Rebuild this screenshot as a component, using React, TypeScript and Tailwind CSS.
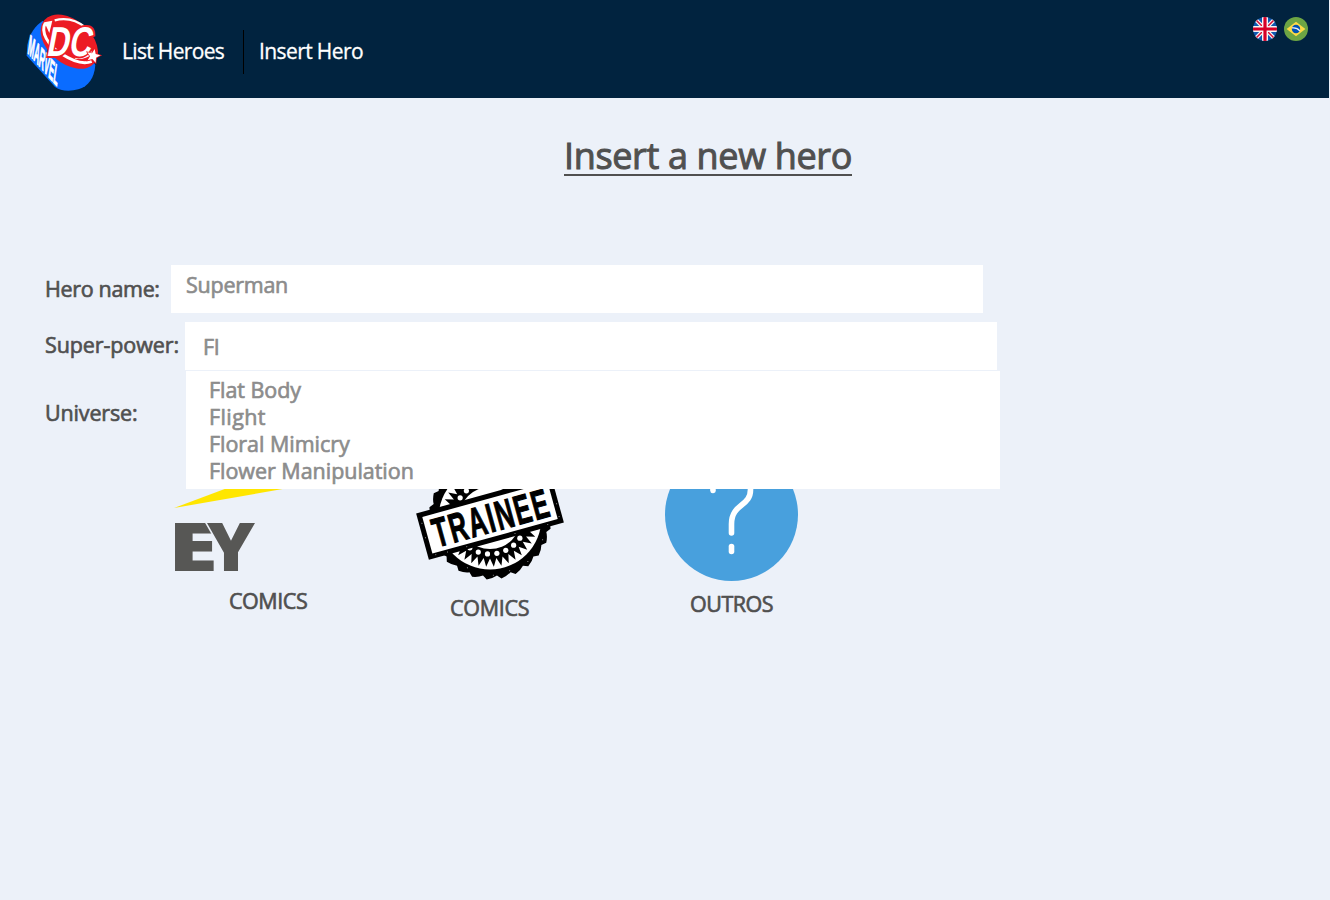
import React from "react";

const suggestions = [
  { name: "Flat Body", tracking: "tracking-[-0.05px]" },
  { name: "Flight", tracking: "tracking-[0.4px]" },
  { name: "Floral Mimicry", tracking: "tracking-[-0.03px]" },
  { name: "Flower Manipulation", tracking: "tracking-[-0.03px]" },
];

function Logo() {
  return (
    <svg className="block h-[95px] w-[100px] overflow-visible" viewBox="0 0 300 285">
      <path d="M82 48 C62 62 44 84 37 120 L35 152 L120 246 C134 258 165 260 190 253 C220 244 238 220 241 180 L190 90 Z" fill="#0a6cff" />
      <g transform="translate(37 143) skewY(49) skewX(-7)">
        <text x="0" y="0" fontFamily="Liberation Sans Narrow, Liberation Sans, sans-serif" fontWeight="700" fontSize="94" fill="#fff" stroke="#fff" strokeWidth="3.5" textLength="89" lengthAdjust="spacingAndGlyphs">MARVEL</text>
      </g>
      <ellipse cx="163" cy="110" rx="99" ry="65" transform="rotate(41 163 110)" fill="#ec1c24" />
      <path d="M91 54 C76 80 98 122 140 147 C174 169 208 178 230 169" fill="none" stroke="#fff" strokeWidth="9" />
      <path d="M119 46 C154 37 188 48 212 68 M180 157 C202 163 224 151 231 141" fill="none" stroke="#fff" strokeWidth="7" />
      <path d="M88 52 L112 47 L103 84 Z" fill="#fff" />
      <g transform="translate(92 153) skewX(-11)">
        <text x="0" y="0" fontFamily="Liberation Sans, sans-serif" fontWeight="700" fontSize="125" fill="#fff" stroke="#ec1c24" strokeWidth="12" paintOrder="stroke" textLength="134" lengthAdjust="spacingAndGlyphs">DC</text>
      </g>
      <path d="M239 132 L242 147 L256 151 L243 158 L242 173 L232 162 L218 166 L225 154 L217 142 L231 145 Z" fill="#fff" stroke="#ec1c24" strokeWidth="4" paintOrder="stroke" />
    </svg>
  );
}

function FlagUk() {
  return (
    <svg className="block size-6" viewBox="0 0 24 24">
      <clipPath id="uk"><circle cx="12" cy="12" r="12" /></clipPath>
      <g clipPath="url(#uk)">
        <rect width="24" height="24" fill="#0f57b0" />
        <path d="M0 0 L24 24 M24 0 L0 24" stroke="#f3f3f3" strokeWidth="4" />
        <path d="M0 0 L24 24 M24 0 L0 24" stroke="#d80d35" strokeWidth="1.5" />
        <path d="M12 0V24M0 12H24" stroke="#f5f5f5" strokeWidth="6" />
        <path d="M12 0V24M0 12H24" stroke="#d80027" strokeWidth="3.2" />
      </g>
    </svg>
  );
}

function FlagBrazil() {
  return (
    <svg className="block size-6" viewBox="0 0 24 24">
      <circle cx="12" cy="12" r="12" fill="#6da544" />
      <path d="M12 4.7 L21.4 12 L12 19.3 L2.6 12 Z" fill="#ffda44" />
      <circle cx="12" cy="12" r="4.2" fill="#0052b4" />
      <path d="M8 10.9 Q13 10.2 15.8 13.8" fill="none" stroke="#f0f0f0" strokeWidth="1.3" />
    </svg>
  );
}

function EyLogo() {
  return (
    <svg className="block h-[100px] w-[120px] overflow-visible" viewBox="174 475 120 100">
      <path d="M174 508 L262 475 H294 V487 Z" fill="#ffe600" />
      <g fontFamily="Open Sans, Noto Sans, sans-serif" fontWeight="800" fontSize="67.5" fill="#575755">
        <text x="168" y="571" textLength="50" lengthAdjust="spacingAndGlyphs">E</text>
        <text x="207" y="571" textLength="48" lengthAdjust="spacingAndGlyphs" stroke="#ecf1f9" strokeWidth="3" paintOrder="stroke">Y</text>
      </g>
    </svg>
  );
}

function polar(r: number, deg: number) {
  const a = (deg * Math.PI) / 180;
  return `${(r * Math.cos(a)).toFixed(2)} ${(r * Math.sin(a)).toFixed(2)}`;
}

const scallops = Array.from({ length: 26 }, (_, i) => {
  const a = (i * 360) / 26;
  return `${i ? "L" : "M"}${polar(58, a)} Q${polar(60.5, a + 4)} ${polar(61.5, a + 10)}`;
}).join(" ") + "Z";
const spikes = Array.from({ length: 40 }, (_, i) => {
  const a = (i * 360) / 40;
  return `${i ? "L" : "M"}${polar(40.5, a)} L${polar(49, a + 4.5)}`;
}).join(" ") + "Z";
const dots = Array.from({ length: 24 }, (_, i) => polar(36, (i * 360) / 24 + 4).split(" "));
const specks = [[-67, -13], [-62, 21], [-50, 21.5], [67, -16], [67, 17], [-30, 21.5], [-35, 42], [5, 56], [25, 52], [45, 35], [-12, 56], [54, 21.5], [-67.5, 2], [68, 4], [20, 21.5]];

function TraineeStamp() {
  return (
    <svg className="block h-[132px] w-[150px]" viewBox="-75 -66 150 132">
      <path d={scallops} fill="#000" />
      <circle r="51.5" fill="#fff" />
      <path d={spikes} fill="#000" />
      <circle r="31" fill="#fff" />
      {dots.map(([x, y]) => <circle key={`${x},${y}`} cx={x} cy={y} r="2.6" fill="#fff" />)}
      <g transform="rotate(-15.4)">
        <rect x="-70" y="-24" width="140" height="48" fill="#000" />
        <rect x="-65" y="-19" width="130" height="38" fill="#fff" />
        <g transform="scale(0.6 1)">
          <text x="-98" y="14.3" fontFamily="Liberation Sans, sans-serif" fontWeight="700" fontSize="41" stroke="#000" strokeWidth="1.1" textLength="198" lengthAdjust="spacing">TRAINEE</text>
        </g>
        {specks.map(([x, y]) => <circle key={`${x},${y}`} cx={x} cy={y} r="0.5" fill="#bbb" />)}
      </g>
    </svg>
  );
}

function QuestionBadge() {
  return (
    <svg className="block size-[133px]" viewBox="665 448 133 133">
      <circle cx="731.5" cy="514.5" r="66.5" fill="#48a0dd" />
      <path d="M713 490.5 C711 467 750 467 750.5 489 C751 507 731.5 503 731.5 524 V533" fill="none" stroke="#fff" strokeWidth="5.6" strokeLinecap="round" />
      <path d="M731.5 546.5 V551.5" stroke="#fff" strokeWidth="5.6" strokeLinecap="round" />
    </svg>
  );
}

export default function App() {
  return (
    <div className="h-[900px] w-[1330px] overflow-hidden bg-[#ecf1f9] font-['Open_Sans','Noto_Sans',sans-serif] text-[21.5px] leading-[27px] whitespace-nowrap text-[#505050] [-webkit-text-stroke:0.65px_currentColor]">
      <header className="flex h-[98px] w-[1329px] items-start bg-[#01233f] pt-[5px] pl-[15px] text-[21px] text-white [-webkit-text-stroke:0px]">
        <Logo />
        <nav className="flex items-center pt-[25px] pl-[7px] [-webkit-text-stroke:0.3px_white]">
          <a className="w-[121px] pb-[1px] tracking-[-0.67px]">List Heroes</a>
          <span className="h-[44px] w-px bg-black" />
          <a className="pb-[1px] pl-[15px] tracking-[-0.6px]">Insert Hero</a>
        </nav>
        <div className="ml-auto flex gap-[7px] pt-3 pr-[21px]">
          <FlagUk />
          <FlagBrazil />
        </div>
      </header>
      <main className="flex flex-col pl-[45px]">
        <h1 className="mt-[30px] ml-[519px] h-[48px] w-[288px] border-b-2 border-[#505050] text-[36px] leading-[56px] tracking-[-0.35px] [-webkit-text-stroke:1px_currentColor]">Insert a new hero</h1>
        <form className="flex flex-col pt-[89px]">
          <div className="flex h-[48px] items-start">
            <label className="w-[126px] pt-[10px] tracking-[-0.33px]">Hero name:</label>
            <div className="h-[48px] w-[812px] bg-white pt-[6px] pl-[15px] tracking-[-0.25px] text-[#8c8c8c]">Superman</div>
          </div>
          <div className="relative mt-[9px] flex h-[48px] items-start">
            <label className="w-[140px] pt-[9px] tracking-[-0.1px]">Super-power:</label>
            <div className="h-[48px] w-[812px] bg-white pt-[11px] pl-[18px] text-[#8c8c8c]">Fl</div>
            <ul className="absolute top-[49px] left-[141px] z-10 h-[118px] w-[814px] bg-white pt-[5px] pl-[23px] text-[#8c8c8c]">
              {suggestions.map((s) => <li key={s.name} className={s.tracking}>{s.name}</li>)}
            </ul>
          </div>
          <div className="mt-[29px] mb-px tracking-[-0.15px]">Universe:</div>
          <div className="mt-[21px] flex items-start pl-[129px] [-webkit-text-stroke:0px]">
            <div className="flex w-[241px] flex-col pt-[27px]">
              <EyLogo />
              <span className="mt-[12px] ml-[55px] tracking-[-0.45px] [-webkit-text-stroke:0.65px_currentColor]">COMICS</span>
            </div>
            <div className="flex w-[250px] flex-col pt-[4px]">
              <TraineeStamp />
              <span className="mt-[10px] ml-[35px] tracking-[-0.3px] [-webkit-text-stroke:0.65px_currentColor]">COMICS</span>
            </div>
            <div className="flex flex-col">
              <QuestionBadge />
              <span className="mt-[9px] ml-[25px] tracking-[-0.5px] [-webkit-text-stroke:0.65px_currentColor]">OUTROS</span>
            </div>
          </div>
        </form>
      </main>
    </div>
  );
}
